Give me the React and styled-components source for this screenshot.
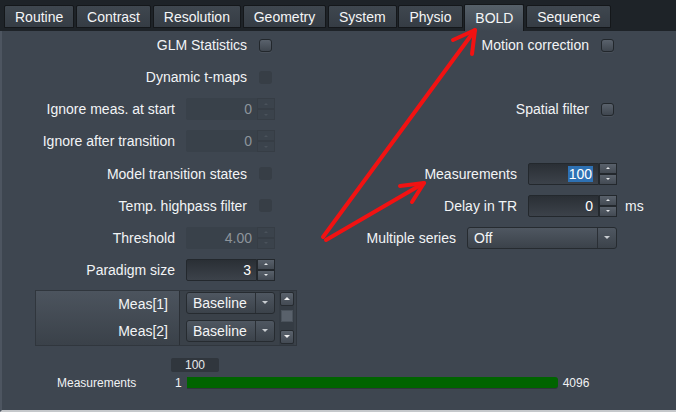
import React from "react";
import styled, { createGlobalStyle } from "styled-components";

const Global = createGlobalStyle`
  html, body {
    margin: 0;
    padding: 0;
    background: #3e4650;
    overflow: hidden;
  }
  body {
    font-family: "Liberation Sans", Arial, sans-serif;
    color: #f2f4f6;
  }
`;

const Screen = styled.div`
  position: relative;
  width: 676px;
  height: 412px;
  display: flex;
  flex-direction: column;
  background: #3e4650;
`;

const TabBar = styled.div`
  height: 31px;
  flex: none;
  display: flex;
  align-items: flex-end;
  gap: 1.8px;
  padding-left: 4px;
  background: #1e2328;
`;

const Tab = styled.div`
  box-sizing: border-box;
  height: ${(p) => (p.$active ? "27px" : "23px")};
  margin-bottom: ${(p) => (p.$active ? "0" : "3px")};
  padding: 0 10px;
  padding-top: ${(p) => (p.$active ? "0" : "1px")};
  display: flex;
  align-items: center;
  font-size: 14px;
  color: #f4f5f6;
  border: 1px solid #14171a;
  border-bottom: ${(p) => (p.$active ? "none" : "1px solid #14171a")};
  border-radius: 2px 2px 0 0;
  background: ${(p) =>
    p.$active
      ? "linear-gradient(#566069, #48515b 60%, #3e4650)"
      : "linear-gradient(#3f474f, #353c44)"};
`;

const Panel = styled.div`
  flex: 1;
  display: flex;
  flex-direction: column;
  border-left: 2px solid #4d5560;
  border-bottom: 2px solid #c5c8cb;
`;

const Columns = styled.div`
  display: flex;
`;

const Column = styled.div`
  width: ${(p) => p.$width}px;
  display: flex;
  flex-direction: column;
  gap: 4.15px;
`;

const Row = styled.div`
  height: 28px;
  display: flex;
  align-items: center;
  justify-content: flex-end;
  gap: 11px;
  font-size: 14px;
  white-space: nowrap;
`;

const Label = styled.span`
  color: #f2f4f6;
`;

const Check = styled.div`
  box-sizing: border-box;
  width: 13px;
  height: 13px;
  margin: 0 3px 0 1px;
  border-radius: 3px;
  ${(p) =>
    p.$enabled
      ? `border: 1px solid #22272c; background: linear-gradient(#5a626c, #3f464f);
         box-shadow: 0 1px 0 rgba(255,255,255,0.06);`
      : `background: #373e46;`}
`;

const Spin = styled.div`
  display: flex;
  height: 22px;
`;

const Field = styled.div`
  box-sizing: border-box;
  width: 71px;
  height: 22px;
  padding-right: 5px;
  display: flex;
  align-items: center;
  justify-content: flex-end;
  font-size: 14px;
  border-radius: 2px 0 0 2px;
  ${(p) =>
    p.$disabled
      ? `background: #39414a; color: #8d949b;`
      : `background: linear-gradient(#2a2f35, #3c424a); color: #ffffff;
         border: 1px solid #23282d;`}
`;

const Steps = styled.div`
  width: 18px;
  display: flex;
  flex-direction: column;
`;

const Step = styled.div`
  box-sizing: border-box;
  flex: 1;
  display: flex;
  align-items: center;
  justify-content: center;
  ${(p) =>
    p.$disabled
      ? `background: #3b434c; border: 1px solid #363d45;`
      : `background: linear-gradient(#59616b, #434a53); border: 1px solid #23282d;`}
  &::after {
    content: "";
    border-left: 2.5px solid transparent;
    border-right: 2.5px solid transparent;
    ${(p) =>
      p.$up
        ? `border-bottom: 2px solid ${p.$disabled ? "#4a525b" : "#e8eaec"};`
        : `border-top: 2px solid ${p.$disabled ? "#4a525b" : "#e8eaec"};`}
  }
`;

const Selected = styled.span`
  background: #2e71b3;
  color: #ffffff;
  padding: 0 1px;
`;

const Suffix = styled.span`
  width: 28px;
  margin-left: -3px;
  font-size: 14px;
`;

const Drop = styled.div`
  box-sizing: border-box;
  width: ${(p) => p.$width}px;
  height: 22px;
  display: flex;
  border: 1px solid #262b30;
  border-radius: 3px;
  background: linear-gradient(#4f5761, #3b424a);
  font-size: 14px;
  color: #f4f5f6;
`;

const DropText = styled.div`
  flex: 1;
  display: flex;
  align-items: center;
  padding-left: 6px;
`;

const DropArrow = styled.div`
  width: 18px;
  display: flex;
  align-items: center;
  justify-content: center;
  border-left: 1px solid #2a2f35;
  &::after {
    content: "";
    border-left: 3px solid transparent;
    border-right: 3px solid transparent;
    border-top: 3px solid #c9cdd1;
  }
`;

const TableWrap = styled.div`
  margin: 6px 0 0 33px;
  width: 262px;
  height: 56px;
  display: flex;
  border: 1px solid #30363d;
  box-sizing: border-box;
  background: #3a4149;
`;

const HeadCol = styled.div`
  width: 143px;
  display: flex;
  flex-direction: column;
  background: linear-gradient(#4c545e, #3a4149);
  border-right: 1px solid #2b3036;
`;

const HeadCell = styled.div`
  height: 27px;
  display: flex;
  align-items: center;
  justify-content: flex-end;
  padding-right: 11px;
  font-size: 14px;
`;

const CellCol = styled.div`
  width: 98px;
  display: flex;
  flex-direction: column;
  gap: 6px;
  padding: 1px 0 0 6px;
  box-sizing: border-box;
`;

const ScrollBar = styled.div`
  width: 15px;
  margin-left: 1px;
  display: flex;
  flex-direction: column;
  align-items: center;
  padding-top: 1px;
  background: #353c44;
`;

const ScrollBtn = styled.div`
  box-sizing: border-box;
  width: 14px;
  height: 14px;
  display: flex;
  align-items: center;
  justify-content: center;
  border: 1px solid #262b30;
  border-radius: 2px;
  background: linear-gradient(#5a626c, #434a53);
  &::after {
    content: "";
    border-left: 3.5px solid transparent;
    border-right: 3.5px solid transparent;
    ${(p) =>
      p.$up
        ? `border-bottom: 3px solid #f0f0f0;`
        : `border-top: 3px solid #f0f0f0;`}
  }
`;

const Thumb = styled.div`
  width: 12px;
  height: 12px;
  margin: 4px 0 8px;
  background: #59616b;
  border: 1px solid #4a525b;
  box-sizing: border-box;
`;

const ValueTag = styled.div`
  margin: 12px 0 0 169px;
  width: 48px;
  height: 14px;
  display: flex;
  align-items: center;
  justify-content: center;
  background: #30363d;
  border-radius: 2px;
  font-size: 12px;
  color: #e6e8ea;
`;

const Progress = styled.div`
  margin-top: 4px;
  height: 14px;
  display: flex;
  align-items: center;
  font-size: 12px;
  color: #f0f2f4;
`;

const ProgressLabel = styled.span`
  width: 118px;
  padding-left: 55px;
`;

const Track = styled.div`
  width: 371px;
  height: 11px;
  margin: 0 5px;
  border-radius: 0 3px 3px 0;
  background: #006400;
  box-shadow: 0 1px 0 #2f353c;
`;

const Overlay = styled.svg`
  position: absolute;
  left: 0;
  top: 0;
  pointer-events: none;
`;

const tabs = ["Routine", "Contrast", "Resolution", "Geometry", "System", "Physio", "BOLD", "Sequence"];

function SpinBox({ value, disabled, selected }) {
  return (
    <Spin>
      <Field $disabled={disabled}>{selected ? <Selected>{value}</Selected> : value}</Field>
      <Steps>
        <Step $up $disabled={disabled} />
        <Step $disabled={disabled} />
      </Steps>
    </Spin>
  );
}

function Dropdown({ text, width }) {
  return (
    <Drop $width={width}>
      <DropText>{text}</DropText>
      <DropArrow />
    </Drop>
  );
}

const leftRows = [
  { label: "GLM Statistics", check: true },
  { label: "Dynamic t-maps", check: false },
  { label: "Ignore meas. at start", spin: "0", disabled: true },
  { label: "Ignore after transition", spin: "0", disabled: true },
  { label: "Model transition states", check: false },
  { label: "Temp. highpass filter", check: false },
  { label: "Threshold", spin: "4.00", disabled: true },
  { label: "Paradigm size", spin: "3" },
];

function Arrow({ tail, tip, a, b }) {
  return (
    <g>
      <line x1={tail[0]} y1={tail[1]} x2={tip[0]} y2={tip[1]} />
      <polyline points={`${a[0]},${a[1]} ${tip[0]},${tip[1]} ${b[0]},${b[1]}`} />
    </g>
  );
}

export default function App() {
  return (
    <Screen>
      <Global />
      <TabBar>
        {tabs.map((t) => (
          <Tab key={t} $active={t === "BOLD"}>{t}</Tab>
        ))}
      </TabBar>
      <Panel>
        <Columns>
          <Column $width={273}>
            {leftRows.map((r) => (
              <Row key={r.label}>
                <Label>{r.label}</Label>
                {r.spin !== undefined ? (
                  <SpinBox value={r.spin} disabled={r.disabled} />
                ) : (
                  <Check $enabled={r.check} />
                )}
              </Row>
            ))}
          </Column>
          <Column $width={378}>
            <Row>
              <Label>Motion correction</Label>
              <Check $enabled />
              <Suffix />
            </Row>
            <Row />
            <Row>
              <Label>Spatial filter</Label>
              <Check $enabled />
              <Suffix />
            </Row>
            <Row />
            <Row>
              <Label>Measurements</Label>
              <SpinBox value="100" selected />
              <Suffix />
            </Row>
            <Row>
              <Label>Delay in TR</Label>
              <SpinBox value="0" />
              <Suffix>ms</Suffix>
            </Row>
            <Row>
              <Label>Multiple series</Label>
              <Dropdown text="Off" width={150} />
              <Suffix />
            </Row>
          </Column>
        </Columns>

        <TableWrap>
          <HeadCol>
            <HeadCell>Meas[1]</HeadCell>
            <HeadCell>Meas[2]</HeadCell>
          </HeadCol>
          <CellCol>
            <Dropdown text="Baseline" width={89} />
            <Dropdown text="Baseline" width={89} />
          </CellCol>
          <ScrollBar>
            <ScrollBtn $up />
            <Thumb />
            <ScrollBtn />
          </ScrollBar>
        </TableWrap>

        <ValueTag>100</ValueTag>
        <Progress>
          <ProgressLabel>Measurements</ProgressLabel>
          <span>1</span>
          <Track />
          <span>4096</span>
        </Progress>
      </Panel>

      <Overlay width="676" height="412" viewBox="0 0 676 412">
        <g stroke="#f21212" strokeWidth="4" fill="none" strokeLinecap="round" strokeLinejoin="round">
          <Arrow tail={[323, 237]} tip={[475, 30]} a={[453, 40]} b={[472, 54]} />
          <Arrow tail={[326, 240]} tip={[424, 183]} a={[400, 186]} b={[412, 202]} />
        </g>
      </Overlay>
    </Screen>
  );
}
